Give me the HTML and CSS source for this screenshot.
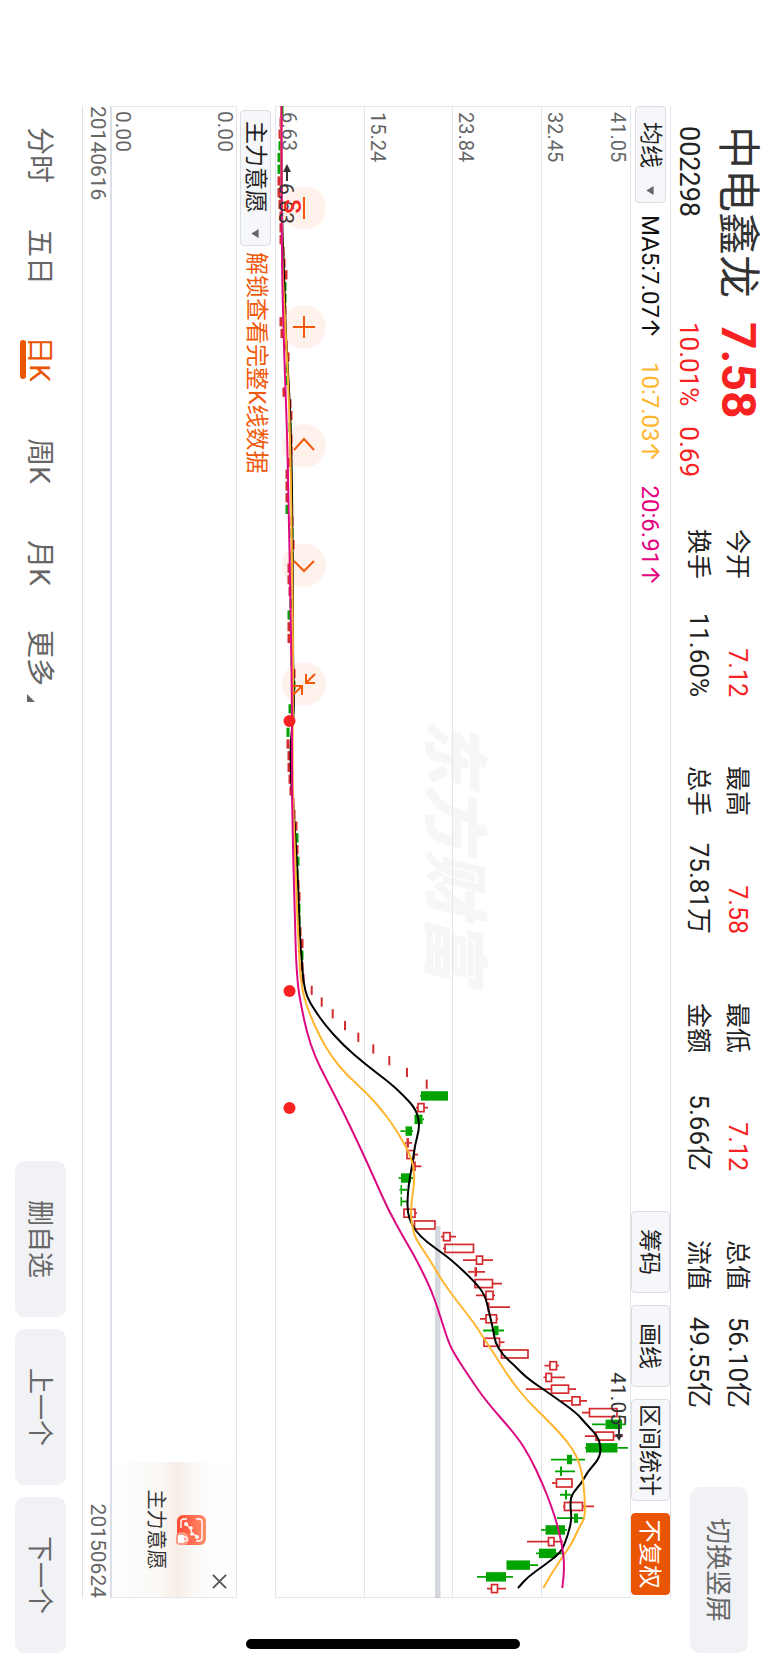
FILE: index.html
```
<!DOCTYPE html>
<html lang="zh-CN">
<head>
<meta charset="utf-8">
<meta name="viewport" content="width=device-width, initial-scale=1">
<title>中电鑫龙 002298</title>
<link rel="stylesheet" href="styles.css">
</head>
<body>
<div class="window">
<main class="stage">
  <header class="header">
    <div class="identity">
      <h1 class="name">中电鑫龙</h1>
      <strong class="price">7.58</strong>
      <span class="code">002298</span>
      <span class="change"><span>10.01%</span><span>0.69</span></span>
    </div>
    <div class="stats">
      <dl class="stat"><dt>今开</dt><dd class="up">7.12</dd><dt>换手</dt><dd>11.60%</dd></dl>
      <dl class="stat"><dt>最高</dt><dd class="up">7.58</dd><dt>总手</dt><dd>75.81万</dd></dl>
      <dl class="stat"><dt>最低</dt><dd class="up">7.12</dd><dt>金额</dt><dd>5.66亿</dd></dl>
      <dl class="stat"><dt>总值</dt><dd>56.10亿</dd><dt>流值</dt><dd>49.55亿</dd></dl>
    </div>
    <button class="soft-button switch" type="button">切换竖屏</button>
  </header>

  <section class="board">
    <div class="toolbar">
      <div class="picker">
        <select class="picker-select" aria-label="主图指标"><option>均线</option></select>
        <svg class="caret" viewBox="0 0 10 8" aria-hidden="true"><path d="M0 0H10L5 8Z"/></svg>
      </div>
      <div class="averages">
        <span class="ma5">MA5:7.07<i class="arrow">↑</i></span>
        <span class="ma10">10:7.03<i class="arrow">↑</i></span>
        <span class="ma20">20:6.91<i class="arrow">↑</i></span>
      </div>
      <div class="tools">
        <button class="tool" type="button">筹码</button>
        <button class="tool" type="button">画线</button>
        <button class="tool tool-wide" type="button">区间统计</button>
        <button class="tool tool-on" type="button">不复权</button>
      </div>
    </div>

    <div class="plot">
      <div class="watermark" aria-hidden="true">东方财富</div>
      <div class="bands">
        <div class="band band-top"><span>41.05</span><span>32.45</span></div>
        <div class="band"><span>23.84</span></div>
        <div class="band"><span>15.24</span></div>
        <div class="band"><span>6.63</span></div>
      </div>
      <svg class="candles" viewBox="0 0 1492 356" preserveAspectRatio="none" role="img" aria-label="日K线图"></svg>
      <span class="mark mark-low">6.63</span>
      <span class="mark mark-sell">S</span>
      <span class="mark mark-high">41.05</span>
      <div class="controls">
        <button class="round" type="button" aria-label="缩小"><svg viewBox="-22 -22 44 44"><path d="M-11 0H11"/></svg></button>
        <button class="round" type="button" aria-label="放大"><svg viewBox="-22 -22 44 44"><path d="M-11 0H11M0 -11V11"/></svg></button>
        <button class="round" type="button" aria-label="向左"><svg viewBox="-22 -22 44 44"><path d="M4 -10L-7 0L4 10"/></svg></button>
        <button class="round" type="button" aria-label="向右"><svg viewBox="-22 -22 44 44"><path d="M-4 -10L6 0L-4 10"/></svg></button>
        <button class="round" type="button" aria-label="收起"><svg viewBox="-22 -22 44 44"><path d="M-10 -11L-1 -2M-10 -2H-1V-11M11 11L2 2M11 2H2V11"/></svg></button>
      </div>
    </div>

    <div class="subbar">
      <div class="picker picker-long">
        <select class="picker-select" aria-label="副图指标"><option>主力意愿</option></select>
        <svg class="caret" viewBox="0 0 10 8" aria-hidden="true"><path d="M0 0H10L5 8Z"/></svg>
      </div>
      <a class="unlock" href="#unlock">解锁查看完整K线数据</a>
    </div>

    <div class="panel">
      <div class="panel-scale"><span>0.00</span><span>0.00</span></div>
      <aside class="promo">
        <button class="close" type="button" aria-label="关闭"><svg viewBox="0 0 16 16"><path d="M1 1L15 15M15 1L1 15"/></svg></button>
        <svg class="promo-icon" viewBox="0 0 30 30" aria-hidden="true">
          <defs><linearGradient id="tile" x1="0" y1="0" x2="0" y2="1"><stop offset="0" stop-color="#ff8f6b"/><stop offset="1" stop-color="#ff4a33"/></linearGradient></defs>
          <rect width="30" height="29" rx="6" fill="url(#tile)"/>
          <path d="M4 10V7Q4 4 7 4H23Q26 4 26 7V10M4 19V22Q4 25 7 25H13" fill="none" stroke="#fff" stroke-width="1.4"/>
          <path d="M9 20L13 16L18 14L22 9" fill="none" stroke="#fff" stroke-width="1.2"/>
          <g fill="#fff"><circle cx="9" cy="20" r="2"/><circle cx="13" cy="15" r="1.8"/><circle cx="19" cy="14" r="1.8"/><circle cx="22" cy="9" r="2"/></g>
          <circle cx="24" cy="24" r="7" fill="#ff9b84"/>
          <rect x="20" y="22" width="8" height="6" rx="1" fill="#fff"/>
          <path d="M22 22V20Q24 17 26 20V22" fill="none" stroke="#fff" stroke-width="1.3"/>
        </svg>
        <span>主力意愿</span>
      </aside>
    </div>

    <div class="dates"><time>20140616</time><time>20150624</time></div>
  </section>

  <footer class="footer">
    <nav class="tabs">
      <button class="tab" type="button">分时</button>
      <button class="tab" type="button">五日</button>
      <button class="tab tab-on" type="button">日K</button>
      <button class="tab" type="button">周K</button>
      <button class="tab" type="button">月K</button>
      <button class="tab tab-more" type="button">更多<svg class="corner" viewBox="0 0 8 8" aria-hidden="true"><path d="M8 0V8H0Z"/></svg></button>
    </nav>
    <div class="actions">
      <button class="soft-button" type="button">删自选</button>
      <button class="soft-button" type="button">上一个</button>
      <button class="soft-button" type="button">下一个</button>
    </div>
  </footer>
  <div class="home-bar"></div>
</main>
</div>
<script src="chart.js"></script>
</body>
</html>
```

FILE: styles.css
```
* { box-sizing: border-box; }

body {
  margin: 0;
  background: #fff;
  font-family: Roboto, "Noto Sans CJK SC", sans-serif;
  color: #222;
}

.window {
  position: relative;
  width: 100%;
  height: 100vh;
  overflow: hidden;
}

/* Landscape screen turned a quarter clockwise in a portrait window */
.stage {
  position: absolute;
  left: 0;
  top: 0;
  display: flex;
  flex-direction: column;
  width: 100vh;
  height: 100vw;
  transform-origin: 0 0;
  transform: rotate(90deg) translateY(-100%);
}

button, select {
  margin: 0;
  padding: 0;
  border: 0;
  background: none;
  color: inherit;
  font: inherit;
}

/* Header */
.header {
  display: flex;
  flex: none;
  height: 98px;
  padding: 0 12px 0 126px;
}

.identity {
  display: grid;
  grid-template-columns: 196px auto;
  grid-template-rows: 62px 36px;
  align-items: center;
  width: 403px;
}

.name {
  margin: 0;
  font-size: 43px;
  font-weight: 400;
  line-height: 62px;
  color: #333;
}

.price {
  font-size: 48px;
  font-weight: 700;
  line-height: 62px;
  color: #f82222;
}

.code, .change {
  font-size: 26px;
  line-height: 36px;
}

.code { font-size: 27px; }

.change {
  display: flex;
  gap: 20px;
  color: #f82222;
}

.stats {
  display: flex;
  gap: 69px;
  padding-top: 12px;
}

.stat {
  display: grid;
  grid-template-columns: auto 1fr;
  width: 168px;
  margin: 0;
  line-height: 39px;
  height: 78px;
}

.stat dt { font-size: 25px; }
.stat dd { margin: 0; font-size: 26px; text-align: right; }
.stat .up { color: #f82222; font-size: 25px; }

.soft-button {
  padding-bottom: 3px;
  border-radius: 10px;
  background: #f1f2f5;
  color: #666;
  font-size: 26px;
}

.switch {
  width: 166px;
  height: 58px;
  margin: 21px 0 0 auto;
}

/* Board */
.board { flex: none; margin: 0 67px 0 106px; }

.toolbar {
  display: flex;
  align-items: center;
  height: 40px;
  padding-right: 3px;
  border-top: 1px solid #e2e3e8;
}

.picker { position: relative; width: 97px; height: 31px; }
.picker-long { width: 136px; }

.picker-select {
  width: 100%;
  height: 100%;
  padding-left: 15px;
  border: 1px solid #dcdee5;
  border-radius: 4px;
  background: #f6f7fa;
  font-size: 23px;
  line-height: 29px;
  appearance: none;
}

.picker-long .picker-select { padding-left: 10px; }

.caret {
  position: absolute;
  right: 8px;
  top: 12px;
  width: 9px;
  height: 8px;
  fill: #666;
  pointer-events: none;
}

.averages {
  display: flex;
  gap: 24px;
  margin-left: 12px;
  font-size: 24px;
  line-height: 38px;
}

.arrow { font-family: Inter, sans-serif; font-style: normal; }
.ma5 { color: #111; }
.ma10 { color: #ffb62e; }
.ma20 { color: #e5007f; }

.tools { display: flex; gap: 12px; height: 39px; margin-left: auto; }

.tool {
  width: 82px;
  padding-bottom: 3px;
  border: 1px solid #dcdee5;
  border-radius: 4px;
  background: #f6f7fa;
  font-size: 23px;
  white-space: nowrap;
}

.tool-wide { width: 102px; }
.tool-on { border-color: #ea5504; background: #ea5504; color: #fff; }

.plot {
  position: relative;
  height: 356px;
  border: solid #e4e6ea;
  border-width: 1px 1px 0 1px;
}

.bands {
  position: absolute;
  inset: 0;
  display: grid;
  grid-template-rows: repeat(4, 1fr);
}

.band {
  display: flex;
  flex-direction: column;
  justify-content: flex-end;
  padding: 0 5px;
  border-bottom: 1px solid #e2e5ec;
  color: #666;
  font-size: 20px;
  line-height: 25px;
}

.band-top { justify-content: space-between; }

.watermark {
  position: absolute;
  left: 41%;
  top: 130px;
  color: #f6f6f7;
  font-size: 66px;
  font-style: italic;
  font-weight: 900;
  line-height: 94px;
}

.candles {
  position: absolute;
  left: -1px;
  top: -1px;
  width: calc(100% + 2px);
  height: 356px;
}

.mark {
  position: absolute;
  color: #333;
  font-size: 21px;
  line-height: 24px;
}

.mark-low { left: 76px; top: 332px; }
.mark-sell { left: 92px; top: 326px; color: #f82222; font-size: 24px; font-weight: 500; }
.mark-high { right: 172px; top: 0; }

.controls {
  position: absolute;
  left: 79px;
  bottom: 7px;
  display: flex;
  gap: 75px;
}

.round {
  width: 44px;
  height: 44px;
  border-radius: 50%;
  background: rgba(255, 85, 10, 0.08);
}

.round svg {
  display: block;
  width: 44px;
  height: 44px;
  fill: none;
  stroke: #f4590a;
  stroke-width: 2;
}

.subbar {
  display: flex;
  align-items: center;
  gap: 6px;
  height: 38px;
  padding-left: 4px;
}

.unlock { color: #f0590c; font-size: 23px; line-height: 34px; text-decoration: none; }

.panel {
  display: flex;
  justify-content: space-between;
  height: 127px;
  border: 1px solid #e4e6ea;
  border-bottom: 2px solid #dcdfe8;
}

.panel-scale {
  display: flex;
  flex-direction: column;
  justify-content: space-between;
  padding-left: 4px;
  color: #666;
  font-size: 21px;
  line-height: 22px;
}

.promo {
  position: relative;
  display: flex;
  flex-direction: column;
  align-items: center;
  gap: 6px;
  width: 135px;
  padding-top: 30px;
  background: linear-gradient(#fdfdfd 20%, #fbf8f4 35%, #f6ede8 47%, #fbf8f5 62%, #fdfdfd 90%);
  color: #333;
  font-size: 20px;
  line-height: 28px;
}

.promo-icon { width: 30px; height: 30px; }

.close {
  position: absolute;
  right: 8px;
  top: 9px;
  width: 15px;
  height: 15px;
}

.close svg {
  display: block;
  fill: none;
  stroke: #555;
  stroke-width: 2;
}

.dates {
  display: flex;
  justify-content: space-between;
  height: 28px;
  border-bottom: 1px solid #dfe1e6;
  color: #666;
  font-size: 21px;
  line-height: 25px;
}

/* Footer */
.footer {
  display: flex;
  flex: 1;
  align-items: center;
  justify-content: space-between;
  padding: 0 12px 0 104px;
}

.tabs { display: flex; padding-top: 4px; }

.tab {
  position: relative;
  width: 102px;
  color: #666;
  font-size: 28px;
  line-height: 40px;
}

.tab-on { color: #ea5504; }

.tab-on::after {
  content: "";
  position: absolute;
  left: 32px;
  bottom: 1px;
  width: 39px;
  height: 6px;
  border-radius: 3px;
  background: #ea5504;
}

.tab-more { width: 88px; }

.corner {
  position: absolute;
  right: 0;
  bottom: 8px;
  width: 8px;
  height: 8px;
  fill: #666;
}

.actions { display: flex; gap: 12px; }
.actions .soft-button { width: 156px; height: 51px; }

.home-bar {
  position: absolute;
  right: 16px;
  bottom: 32%;
  width: 10px;
  height: 274px;
  border-radius: 5px;
  background: #000;
}
```

FILE: chart.js
```
// Plot area: 1492 wide, 356 high. Levels are heights above the bottom line.
const HEIGHT = 356;
const STEP = 11.73;
const FIRST = 4.6;
const RED = "#d42b2e";
const GREEN = "#00a300";
const svg = document.querySelector(".candles");

function add(name, attrs) {
  const node = document.createElementNS("http://www.w3.org/2000/svg", name);
  for (const key in attrs) node.setAttribute(key, attrs[key]);
  svg.append(node);
}

// Quiet stretch: level of each flat candle and its colour
const quiet = [
  "g7 r6 r5 g5 g4 g4 r4 r4 r5 r6 r6 r6 r8 r9 r11 g10",
  "g10 r10 r6 r7 r11 r13 g12 g12 r9 r15 r16 g15 r16 r16 r14 r12",
  "r12 r12 g12 r17 g17 r18 g17 r14 r14 r15 g16 g14 r14 r14 r17 g17",
  "r19 g19 g18 g15 r14 g13 r13 r14 r14 r15 r16 r18 r19 r21 g22 r22",
  "g23 g22 r23 r24 g24 g24 r25 r27 g27 r27 r28"
].join(" ").split(" ").map(s => [s[0], +s.slice(1)]);

// Limit-up stretch
const jumps = [36.7, 46.7, 57.7, 70, 83.3, 98.3, 114.3, 132, 151.7];

// Colour, body bottom, body top, low, high (h = hollow red, r = filled red, g = green)
const active = [
  ["g",146,173,145,173],["h",143,149,141,153],["g",139.5,147.5,139.5,149],["g",130.5,137,125.5,138],
  ["r",131.5,134,130,137],["h",132,139,132,143],["h",138,140,138,146.5],["g",126,136,123.5,138],
  ["g",125.5,127,124.5,132],["g",125.5,127,125.5,132],["h",129,140,128,142],["h",139.5,160,139.5,160],
  ["h",168.5,175,166,181],["h",170,198.5,168,198.5],["h",201.5,207.5,188,218],["r",199.5,202,193,210],
  ["h",200,217.5,200,227],["h",211,218,201,220],["r",212.5,214.5,212,235],["h",211,221.5,205,223],
  ["g",219,223.5,208,229],["h",209,224.5,209,229.5],["h",226.5,253,226.5,253],["h",275,281.5,269.5,284],
  ["h",271,276.5,268.5,290],["h",276.5,293.5,251,301],["h",297,305,286,312],["h",314.5,342,307,342],
  ["g",330.5,347,317,351],["h",321,338.5,310,348],["g",311,342.5,310,353],["g",292,297,276,310],
  ["g",285,287,280,300],["h",281.5,297,277,297],["g",290,292,285,296],["h",289.5,307.5,288,319],
  ["g",299,303,282,310],["g",270.5,290,266,292],["h",273.5,279,252,288],["g",264,281,261,288],
  ["g",231.5,255,231.5,263],["g",211,231,202,238],["h",216.5,222.5,212,231]
];

quiet.forEach(([c, v], i) => {
  add("rect", { x: FIRST + i * STEP - 4.6, y: HEIGHT - v - 1.5, width: 9.2, height: 3, fill: c === "g" ? GREEN : RED });
});
jumps.forEach((v, i) => {
  add("rect", { x: FIRST + (75 + i) * STEP - 4.6, y: HEIGHT - v - 1, width: 9.2, height: 2, fill: RED });
});
active.forEach(([c, bottom, top, low, high], i) => {
  const x = FIRST + (84 + i) * STEP;
  const colour = c === "g" ? GREEN : RED;
  add("path", { d: `M${x} ${HEIGHT - low}V${HEIGHT - bottom}M${x} ${HEIGHT - top}V${HEIGHT - high}`, stroke: colour, "stroke-width": 1.8 });
  if (c === "h") {
    add("rect", { x: x - 4, y: HEIGHT - top, width: 8, height: top - bottom, fill: "none", stroke: colour, "stroke-width": 1.7 });
  } else {
    add("rect", { x: x - 4.7, y: HEIGHT - top, width: 9.4, height: top - bottom, fill: colour });
  }
});

// Pale cursor bar
add("rect", { x: 1120, y: 190.5, width: 372, height: 5.5, fill: "#9ba2ab", opacity: 0.42 });

// Moving averages: pairs of x and level
const averages = [
  ["#000", "0 6 100 6.5 165 9 235 11 280 14 330 16 380 17 440 17.5 500 18 550 18 595 19 610 18.5 622 17 640 15.5 676 16 700 18.5 734 20.5 757 22 790 23.5 834 25 857 27 877 28.5 891 32 902 38.3 919 50 939 68 958 90 977 115 989 128 1002 140 1014 144 1024 144 1039 140 1054 138 1071 135 1087 132.7 1106 132.3 1119 136.7 1131 145.7 1142 160 1154 176.7 1176 200 1189 210 1207 214.3 1224 218.3 1236 220 1249 227.7 1260 240 1272 251.7 1289 276.7 1307 301.7 1317 310 1330 322.7 1342 326 1353 324 1366 312.3 1377 306.7 1389 296 1401 295.3 1412 296.7 1424 294.3 1437 290 1447 285.3 1460 268.3 1471 252.7 1482 243"],
  ["#ffb62e", "0 6 150 7 194 9 244 11.5 294 14 374 16 454 17 534 18 594 18 654 17.5 694 18 734 19.5 774 21 814 22.5 844 24 864 25 877 26.3 892 29.3 909 35 931 45 951 56.7 969 71.7 987 91.7 1004 106.7 1019 118 1036 128.3 1049 135 1062 139 1077 139.3 1094 136.7 1111 135.7 1121 137.7 1132 140 1154 155 1177 168.3 1199 185 1216 198.3 1229 206.7 1244 216.7 1273 235 1294 251.7 1310 268.3 1329 286.7 1344 298.3 1356 304 1371 307.7 1394 310 1412 310 1424 302.7 1436 297.7 1452 286.7 1469 275.7 1482 268.3"],
  ["#dc0a82", "0 6.5 144 6.5 244 9 324 12 394 13.5 494 15.5 594 17 684 17 744 18 814 20 854 21 884 23.3 902 26.7 926 31.7 951 40 974 51.7 1006 68.3 1041 85 1074 100 1104 113.3 1134 130 1151 140 1181 155 1204 163.3 1236 173.3 1249 180 1272 195 1296 211.7 1330 241.7 1351 255 1377 267.3 1401 276.7 1422 283.3 1446 288.3 1464 289.3 1482 287.3"]
];

averages.forEach(([colour, text]) => {
  const n = text.split(" ").map(Number);
  const points = [];
  for (let i = 0; i < n.length; i += 2) points.push([n[i], HEIGHT - n[i + 1]]);
  let d = `M${points[0]}`;
  for (let i = 1; i < points.length - 1; i++) {
    const [x, y] = points[i];
    const [nx, ny] = points[i + 1];
    d += `Q${x} ${y} ${(x + nx) / 2} ${(y + ny) / 2}`;
  }
  d += `L${points[points.length - 1]}`;
  add("path", { d, fill: "none", stroke: colour, "stroke-width": 2 });
});

// Event dots
[615, 885, 1002].forEach(cx => add("circle", { cx, cy: 341.5, r: 6, fill: "#f82222" }));

// Pointers of the lowest and highest price
add("path", { d: "M75 344H62", stroke: "#333", "stroke-width": 2 });
add("path", { d: "M58 344L66 340V348Z", fill: "#333" });
add("path", { d: "M1318 12H1331", stroke: "#333", "stroke-width": 2 });
add("path", { d: "M1335 12L1328 8V16Z", fill: "#333" });
```
